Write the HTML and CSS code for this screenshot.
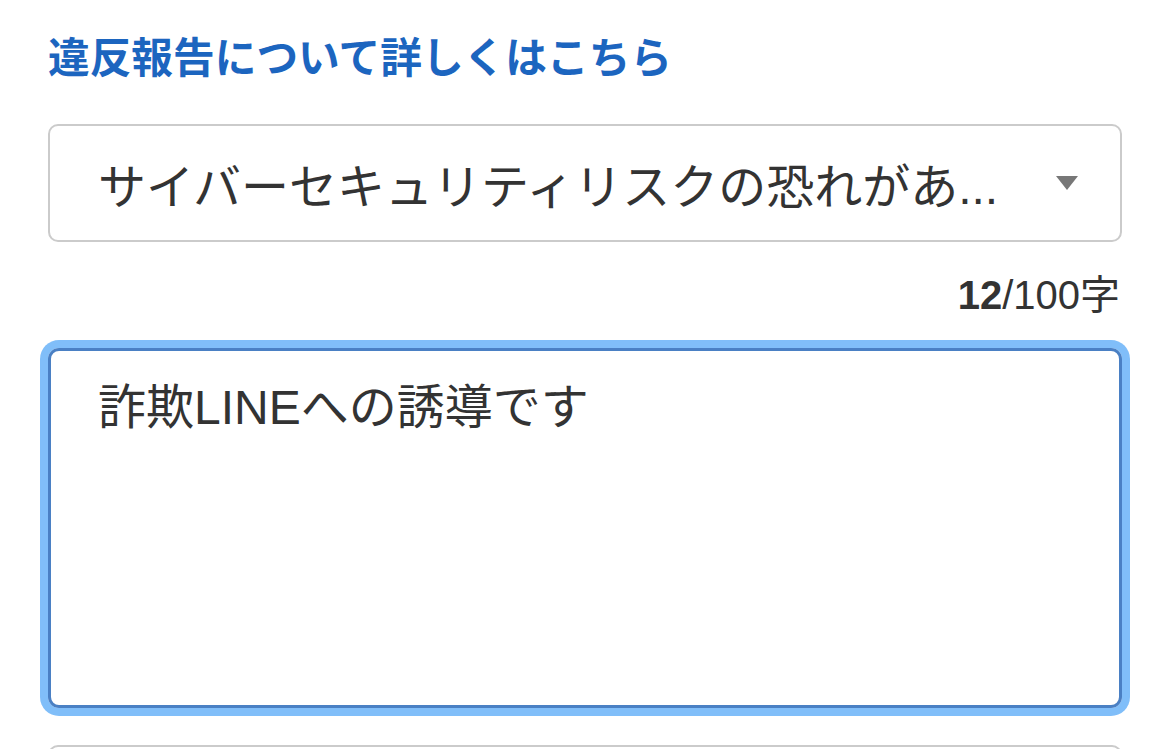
FILE: index.html
```html
<!DOCTYPE html>
<html lang="ja">
<head>
<meta charset="utf-8">
<link rel="stylesheet" href="styles.css">
</head>
<body>
<div class="page">
  <a class="link" href="#">違反報告について詳しくはこちら</a>
  <div class="select">
    <span class="select-text">サイバーセキュリティリスクの恐れがあ...</span>
    <span class="arrow"></span>
  </div>
  <div class="counter"><b>12</b>/100字</div>
  <div class="textarea">詐欺LINEへの誘導です</div>
  <div class="next-box"></div>
</div>
</body>
</html>
```

FILE: styles.css
```css
html, body {
  margin: 0;
  padding: 0;
  background: #fff;
}
body {
  font-family: "Liberation Sans", "Noto Sans CJK JP", sans-serif;
  color: #333;
  overflow: hidden;
  height: 749px;
}
.page {
  padding: 26px 48px 0 48px;
  display: flex;
  flex-direction: column;
}
.link {
  display: block;
  font-family: "Noto Sans CJK JP", sans-serif;
  font-weight: 700;
  font-size: 41.7px;
  line-height: 58px;
  color: #1c65bf;
  text-decoration: none;
}
.select {
  margin-top: 40px;
  height: 118px;
  box-sizing: border-box;
  border: 2px solid #cbcbcb;
  border-radius: 10px;
  display: flex;
  align-items: center;
  padding: 0 42px 0 48px;
}
.select-text {
  flex: 1;
  font-size: 48px;
  color: #333;
  white-space: nowrap;
}
.arrow {
  width: 0;
  height: 0;
  border-left: 11px solid transparent;
  border-right: 11px solid transparent;
  border-top: 14px solid #777;
}
.counter {
  margin-top: 30px;
  text-align: right;
  font-size: 40px;
  line-height: 46px;
  padding-right: 2px;
  color: #333;
}
.counter b {
  font-weight: 700;
}
.textarea {
  margin-top: 30px;
  height: 360px;
  box-sizing: border-box;
  border: 3px solid #4a80c4;
  border-radius: 11px;
  box-shadow: 0 0 0 8px #80bef9;
  padding: 26px 47px;
  font-size: 48px;
  line-height: 62px;
  color: #333;
}
.next-box {
  margin-top: 37px;
  height: 40px;
  border: 2px solid #cbcbcb;
  border-radius: 10px;
}
```
